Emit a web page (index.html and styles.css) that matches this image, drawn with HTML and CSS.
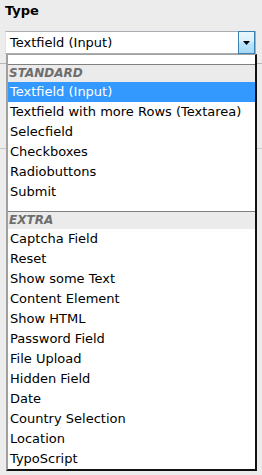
FILE: index.html
```html
<!DOCTYPE html>
<html lang="en">
<head>
  <meta charset="UTF-8" />
  <meta name="viewport" content="width=device-width, initial-scale=1.0"/>
  <title>Type</title>
  <link rel="stylesheet" href="styles.css">
</head>
<body>

  <div class="field">
    <label class="field-label">Type</label>
    <div class="select">
      <span class="select-value">Textfield (Input)</span>
      <span class="select-button">
        <svg width="7" height="4" viewBox="0 0 7 4"><path d="M0 0h7L3.5 4z" fill="#000"/></svg>
      </span>

      <ul class="options">
        <li class="group-label">STANDARD</li>
        <li class="option selected">Textfield (Input)</li>
        <li class="option">Textfield with more Rows (Textarea)</li>
        <li class="option">Selecfield</li>
        <li class="option">Checkboxes</li>
        <li class="option">Radiobuttons</li>
        <li class="option">Submit</li>
        <li class="group-label">EXTRA</li>
        <li class="option">Captcha Field</li>
        <li class="option">Reset</li>
        <li class="option">Show some Text</li>
        <li class="option">Content Element</li>
        <li class="option">Show HTML</li>
        <li class="option">Password Field</li>
        <li class="option">File Upload</li>
        <li class="option">Hidden Field</li>
        <li class="option">Date</li>
        <li class="option">Country Selection</li>
        <li class="option">Location</li>
        <li class="option">TypoScript</li>
      </ul>
    </div>
  </div>

  <!-- rest of the form, covered by the open list -->
  <div class="form-rest">
    <div class="form-row"></div>
    <div class="form-row tall"></div>
  </div>

</body>
</html>
```

FILE: styles.css
```css
html,
body {
  min-height: 475px;
}

body {
  margin: 0;
  font-family: "DejaVu Sans", Verdana, sans-serif;
  font-size: 12px;
  background: #ececec;
  color: #000;
}

.field {
  padding: 3px 6px 0 5px;
}

.field-label {
  display: block;
  font-weight: bold;
  font-size: 13px;
  line-height: 16px;
  margin-bottom: 12px;
}

.select {
  position: relative;
  display: flex;
  align-items: center;
  height: 21px;
  border: 1px solid #abadb3;
  border-left-color: #e2e3ea;
  background: #fff;
}

.select-value {
  flex: 1;
  padding-left: 4px;
  font-size: 13px;
}

.select-button {
  display: flex;
  align-items: center;
  justify-content: center;
  width: 15px;
  height: 21px;
  margin: -1px 0;
  border: 1px solid #3c7fb1;
  background: linear-gradient(#eaf6fd, #d9f0fc 45%, #bee6fd 50%, #a7d9f5);
}

.options {
  position: absolute;
  z-index: 2;
  top: calc(100% + 1px);
  left: 0;
  width: 251px;
  box-sizing: border-box;
  margin: 0;
  padding: 0;
  list-style: none;
  background: #fff;
  border-top: 1px solid #a0a0a0;
  border-left: 2px solid #a0a0a0;
  border-right: 2px solid #111;
  border-bottom: 2px solid #111;
  font-size: 13px;
}

.group-label {
  margin-top: 9px;
  height: 17px;
  line-height: 17px;
  padding-left: 1px;
  border-top: 1px solid #808080;
  background: #ebebeb;
  color: #6e6e6e;
  font-weight: bold;
  font-style: italic;
  font-size: 12px;
}

.option {
  height: 20px;
  line-height: 20px;
  padding-left: 2px;
  white-space: nowrap;
}

.option.selected {
  background: #3399ff;
  color: #fff;
}

.form-rest {
  margin-top: 9px;
  border-top: 1px solid #b8b8b8;
}

.form-row {
  height: 84px;
  border-bottom: 1px solid #c8c8c8;
}

.form-row.tall {
  height: 320px;
  border-bottom: none;
}
```
